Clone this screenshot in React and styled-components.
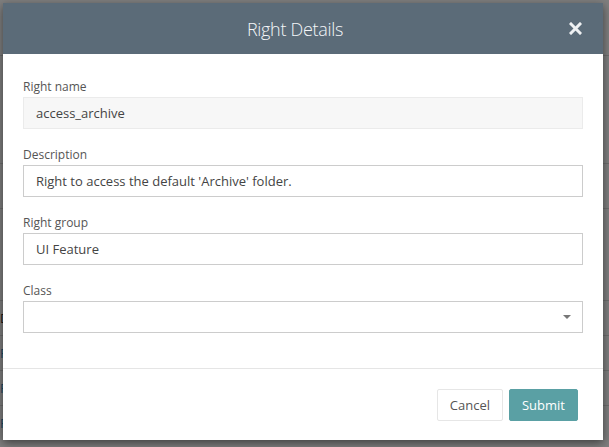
import React from 'react';
import styled, { createGlobalStyle } from 'styled-components';

const GlobalStyle = createGlobalStyle`
  html, body {
    margin: 0;
    padding: 0;
    width: 609px;
    height: 447px;
    overflow: hidden;
    font-family: 'Open Sans', 'Segoe UI', sans-serif;
  }
  * { box-sizing: border-box; }
`;

const Page = styled.div`
  position: relative;
  width: 609px;
  height: 447px;
  background: #fff;
  overflow: hidden;
`;

const Table = styled.div`
  display: flex;
  flex-direction: column;
  padding-top: 55px;
`;

const TableRow = styled.div`
  height: ${(p) => p.h}px;
  border-top: 1px solid #ddd;
  display: flex;
  align-items: center;
  font-size: 13px;
  color: ${(p) => (p.link ? '#3a8fc8' : '#333')};
`;

const Overlay = styled.div`
  position: absolute;
  inset: 0;
  background: rgba(0, 0, 0, 0.5);
  padding: 3px 6px 7px 3px;
  display: flex;
`;

const Modal = styled.div`
  flex: 1;
  background: #fff;
  display: flex;
  flex-direction: column;
  box-shadow: 0 3px 9px rgba(0, 0, 0, 0.5);
`;

const Header = styled.div`
  height: 51px;
  background: #5b6b78;
  display: flex;
  align-items: center;
  padding: 0 20px;
`;

const Title = styled.h4`
  flex: 1;
  margin: 0;
  text-align: center;
  color: #f4f6f8;
  font-size: 18px;
  font-weight: 300;
  letter-spacing: -0.3px;
`;

const Close = styled.button`
  border: 0;
  background: none;
  padding: 0;
  width: 16px;
  height: 16px;
  display: flex;
  align-items: center;
  justify-content: center;
  cursor: pointer;
`;

const Body = styled.div`
  flex: 1;
  padding: 23px 20px 0 20px;
  display: flex;
  flex-direction: column;
  gap: 16px;
`;

const Field = styled.div`
  display: flex;
  flex-direction: column;
`;

const Label = styled.label`
  font-size: 12px;
  color: #555;
  line-height: 20px;
`;

const Input = styled.div`
  height: 32px;
  border: 1px solid ${(p) => (p.readOnly ? '#ebebeb' : '#ccc')};
  background: ${(p) => (p.readOnly ? '#f7f7f7' : '#fff')};
  display: flex;
  align-items: center;
  padding: 0 12px;
  font-size: 13px;
  color: #444;
`;

const Caret = styled.span`
  margin-left: auto;
  margin-right: -1px;
  width: 0;
  height: 0;
  border-left: 4px solid transparent;
  border-right: 4px solid transparent;
  border-top: 4px solid #777;
`;

const Footer = styled.div`
  height: 72px;
  border-top: 1px solid #e5e5e5;
  display: flex;
  align-items: center;
  justify-content: flex-end;
  gap: 6px;
  padding: 0 25px 0 0;
`;

const Button = styled.button`
  height: 32px;
  padding: 0 12px;
  font-family: inherit;
  font-size: 13px;
  border-radius: 2px;
  border: 1px solid ${(p) => (p.primary ? '#5aa0a4' : '#e6e6e6')};
  background: ${(p) => (p.primary ? '#5aa0a4' : '#fff')};
  color: ${(p) => (p.primary ? '#fff' : '#555')};
  cursor: pointer;
`;

const rows = [
  { h: 108, t: '' },
  { h: 45, t: '' },
  { h: 92, t: '' },
  { h: 35, t: 'D' },
  { h: 35, t: 'F', link: true },
  { h: 35, t: 'F', link: true },
  { h: 35, t: 'F', link: true },
];

export default function App() {
  return (
    <>
      <GlobalStyle />
      <Page>
        <Table>
          {rows.map((r, i) => (
            <TableRow key={i} h={r.h} link={r.link}>
              {r.t}
            </TableRow>
          ))}
        </Table>
        <Overlay>
          <Modal>
            <Header>
              <Title>Right Details</Title>
              <Close aria-label="close">
                <svg width="13" height="13" viewBox="0 0 13 13">
                  <path
                    d="M2 2 L11 11 M11 2 L2 11"
                    stroke="#eef0f2"
                    strokeWidth="3"
                    strokeLinecap="square"
                  />
                </svg>
              </Close>
            </Header>
            <Body>
              <Field>
                <Label>Right name</Label>
                <Input readOnly>access_archive</Input>
              </Field>
              <Field>
                <Label>Description</Label>
                <Input>Right to access the default 'Archive' folder.</Input>
              </Field>
              <Field>
                <Label>Right group</Label>
                <Input>UI Feature</Input>
              </Field>
              <Field>
                <Label>Class</Label>
                <Input>
                  <Caret />
                </Input>
              </Field>
            </Body>
            <Footer>
              <Button>Cancel</Button>
              <Button primary>Submit</Button>
            </Footer>
          </Modal>
        </Overlay>
      </Page>
    </>
  );
}
